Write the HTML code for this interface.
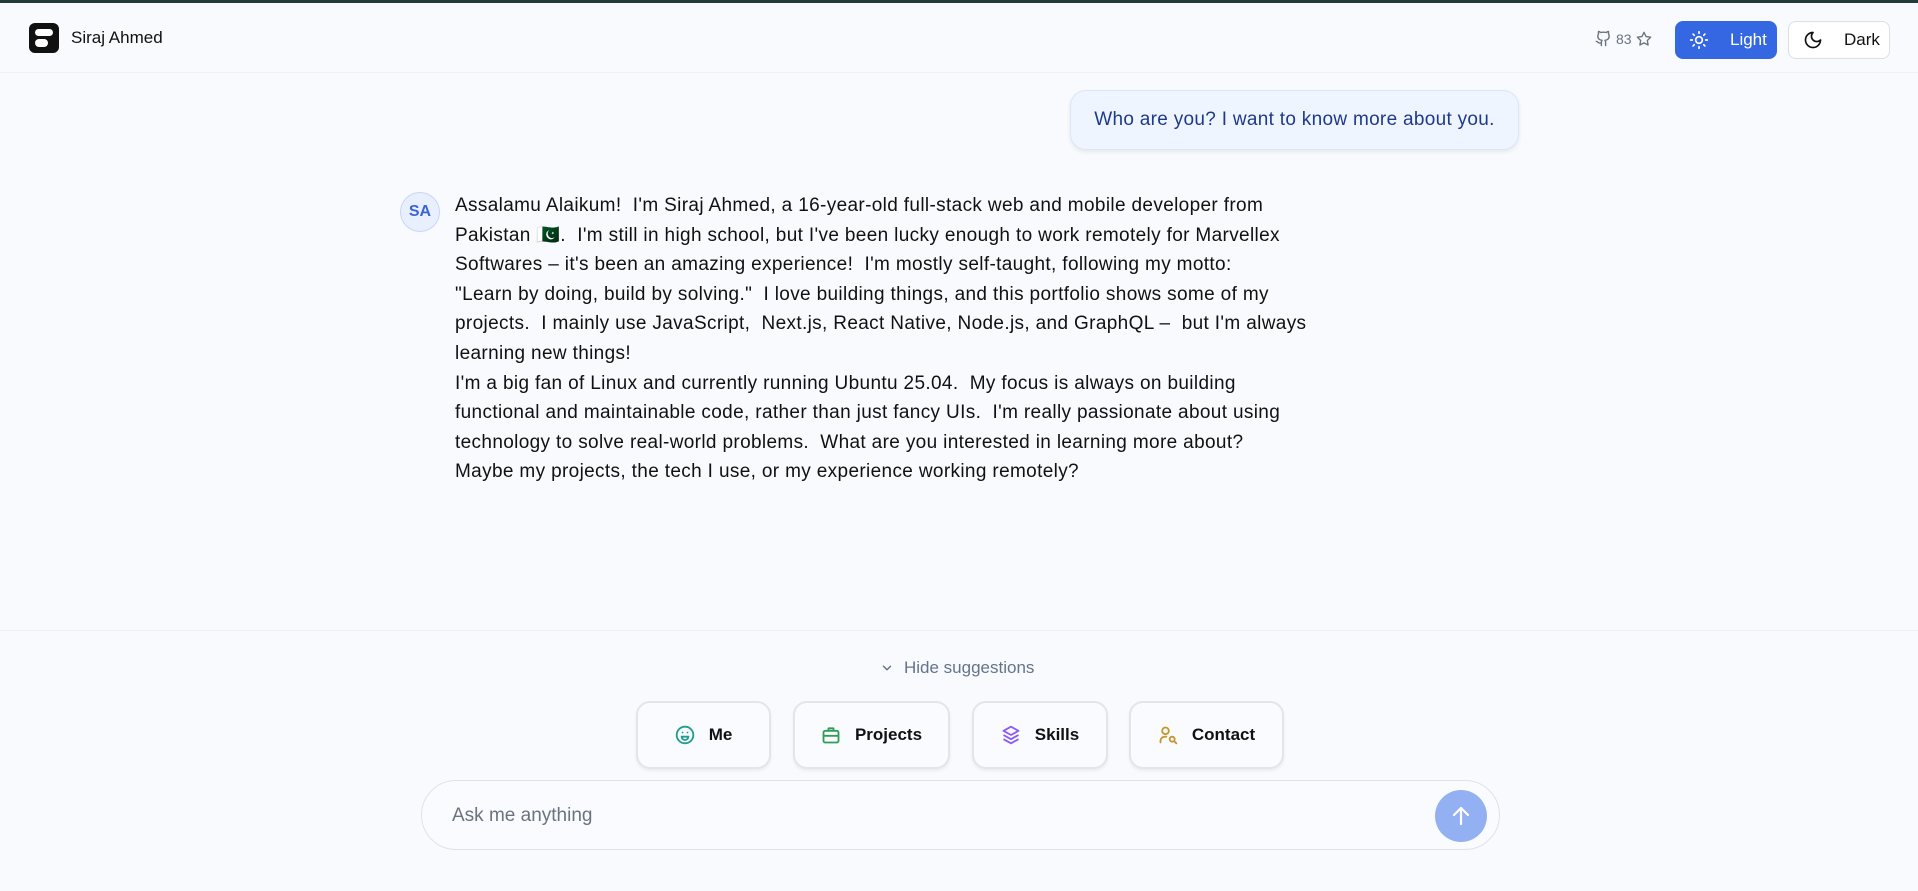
<!DOCTYPE html>
<html><head><meta charset="utf-8"><style>
*{box-sizing:border-box;margin:0;padding:0}
body{width:1918px;height:891px;background:#f9fafd;font-family:"Liberation Sans",sans-serif;position:relative;overflow:hidden;color:#111}
.top{position:absolute;left:0;top:0;width:100%;height:3px;background:#253a3a}
.hdr{position:absolute;left:0;top:3px;width:100%;height:70px;border-bottom:1px solid #eef0f4}
.logo{position:absolute;left:29px;top:20px;width:30px;height:30px;background:#111;border-radius:6px}
.logo i{position:absolute;background:#fff;border-radius:4px}
.name{position:absolute;left:71px;top:25px;font-size:17px;color:#111}
.gh{position:absolute;left:1595px;top:27px;font-size:14px;color:#6b7280;display:flex;align-items:center;gap:4px}
.btn{position:absolute;top:18px;height:38px;border-radius:8px;font-size:17px;display:flex;align-items:center}
.light{left:1675px;width:102px;background:#3567e3;color:#fff}
.dark{left:1788px;width:102px;background:#fff;border:1px solid #dcdfe4;color:#111}
.bubble{position:absolute;left:1070px;top:90px;width:449px;height:60px;background:#eff5ff;border:1px solid #dbe6f8;border-radius:16px;box-shadow:0 2px 4px rgba(0,0,0,.08);color:#1e3a8a;font-size:19px;letter-spacing:0.3px;display:flex;align-items:center;justify-content:center}
.av{position:absolute;left:400px;top:192px;width:40px;height:40px;border-radius:50%;background:#e8efff;border:1px solid #c9d7f5;color:#3a64d8;font-weight:bold;font-size:16px;display:flex;align-items:center;justify-content:center}
.msg{position:absolute;left:455px;top:191px;font-size:19px;letter-spacing:0.35px;line-height:29.6px;color:#111;white-space:nowrap}
.div{position:absolute;left:0;top:630px;width:100%;height:1px;background:#eef0f4}
.hide{position:absolute;left:880px;top:658px;font-size:17px;color:#64748b;display:flex;align-items:center;gap:10px}
.chip{position:absolute;top:701px;height:68px;background:#fafbfe;border:2px solid #e3e5ea;border-radius:14px;box-shadow:0 2px 3px rgba(0,0,0,.06);display:flex;align-items:center;justify-content:center;gap:14px;font-size:17px;font-weight:bold;color:#111}
.inp{position:absolute;left:421px;top:780px;width:1079px;height:70px;border:1px solid #dfe2e8;border-radius:35px;background:#fafbfe}
.ph{position:absolute;left:30px;top:24px;font-size:19px;color:#6b7280}
.send{position:absolute;right:12px;top:9px;width:52px;height:52px;border-radius:50%;background:#93b0f3;display:flex;align-items:center;justify-content:center}
</style></head><body>
<div class="top"></div>
<div class="hdr">
 <div class="logo"><i style="left:6px;top:6px;width:18px;height:7px"></i><i style="left:6px;top:16px;width:13px;height:8px"></i></div>
 <div class="name">Siraj Ahmed</div>
 <div class="gh"><svg width="17" height="17" viewBox="0 0 24 24" fill="none" stroke="#6b7280" stroke-width="2" stroke-linecap="round" stroke-linejoin="round"><path d="M15 22v-4a4.8 4.8 0 0 0-1-3.5c3 0 6-2 6-5.5.08-1.25-.27-2.48-1-3.5.28-1.15.28-2.35 0-3.5 0 0-1 0-3 1.5-2.64-.5-5.36-.5-8 0C6 2 5 2 5 2c-.3 1.15-.3 2.35 0 3.5A5.4 5.4 0 0 0 4 9c0 3.5 3 5.5 6 5.5-.39.49-.68 1.05-.85 1.65S8.93 17.38 9 18v4"/><path d="M9 18c-4.51 2-5-2-7-2"/></svg><span>83</span><svg width="16" height="16" viewBox="0 0 24 24" fill="none" stroke="#6b7280" stroke-width="2" stroke-linejoin="round"><path d="M12 2l3.1 6.3 6.9 1-5 4.9 1.2 6.8L12 17.8 5.8 21l1.2-6.8-5-4.9 6.9-1z"/></svg></div>
 <div class="btn light"><svg style="margin-left:14px" width="20" height="20" viewBox="0 0 24 24" fill="none" stroke="#fff" stroke-width="2" stroke-linecap="round"><circle cx="12" cy="12" r="4"/><path d="M12 2v2M12 20v2M4.9 4.9l1.4 1.4M17.7 17.7l1.4 1.4M2 12h2M20 12h2M4.9 19.1l1.4-1.4M17.7 6.3l1.4-1.4"/></svg><span style="margin-left:21px">Light</span></div>
 <div class="btn dark"><svg style="margin-left:14px" width="20" height="20" viewBox="0 0 24 24" fill="none" stroke="#111" stroke-width="2" stroke-linecap="round" stroke-linejoin="round"><path d="M12 3a6 6 0 0 0 9 9 9 9 0 1 1-9-9z"/></svg><span style="margin-left:21px">Dark</span></div>
</div>
<div class="bubble">Who are you? I want to know more about you.</div>
<div class="av">SA</div>
<div class="msg">Assalamu Alaikum!&nbsp; I'm Siraj Ahmed, a 16-year-old full-stack web and mobile developer from<br>Pakistan 🇵🇰.&nbsp; I'm still in high school, but I've been lucky enough to work remotely for Marvellex<br>Softwares – it's been an amazing experience!&nbsp; I'm mostly self-taught, following my motto:<br>"Learn by doing, build by solving."&nbsp; I love building things, and this portfolio shows some of my<br>projects.&nbsp; I mainly use JavaScript,&nbsp; Next.js, React Native, Node.js, and GraphQL –&nbsp; but I'm always<br>learning new things!<br>I'm a big fan of Linux and currently running Ubuntu 25.04.&nbsp; My focus is always on building<br>functional and maintainable code, rather than just fancy UIs.&nbsp; I'm really passionate about using<br>technology to solve real-world problems.&nbsp; What are you interested in learning more about?<br>Maybe my projects, the tech I use, or my experience working remotely?</div>
<div class="div"></div>
<div class="hide"><svg width="14" height="14" viewBox="0 0 24 24" fill="none" stroke="#64748b" stroke-width="2.5" stroke-linecap="round" stroke-linejoin="round"><path d="M6 9l6 6 6-6"/></svg><span>Hide suggestions</span></div>
<div class="chip" style="left:636px;width:135px"><svg width="20" height="20" viewBox="0 0 24 24" fill="none" stroke="#1f9e8f" stroke-width="2.2" stroke-linecap="round"><circle cx="12" cy="12" r="10"/><path d="M8 14a4 4 0 0 0 8 0z"/><path d="M9 9h.01M15 9h.01"/></svg><span>Me</span></div>
<div class="chip" style="left:793px;width:157px"><svg width="20" height="20" viewBox="0 0 24 24" fill="none" stroke="#2f9e55" stroke-width="2.2" stroke-linejoin="round"><rect x="3" y="7" width="18" height="14" rx="2"/><path d="M9 7V4h6v3M3 13h18"/></svg><span>Projects</span></div>
<div class="chip" style="left:972px;width:136px"><svg width="20" height="20" viewBox="0 0 24 24" fill="none" stroke="#8b5cf6" stroke-width="2.2" stroke-linejoin="round"><path d="M12 2l9 5-9 5-9-5z"/><path d="M3 12l9 5 9-5M3 17l9 5 9-5"/></svg><span>Skills</span></div>
<div class="chip" style="left:1129px;width:155px"><svg width="20" height="20" viewBox="0 0 24 24" fill="none" stroke="#c9952e" stroke-width="2.2" stroke-linecap="round"><circle cx="9" cy="7" r="4"/><path d="M3 21v-2a5 5 0 0 1 5-5h2"/><circle cx="17" cy="17" r="3"/><path d="M19.5 19.5L22 22"/></svg><span>Contact</span></div>
<div class="inp"><div class="ph">Ask me anything</div><div class="send"><svg width="24" height="24" viewBox="0 0 24 24" fill="none" stroke="#fff" stroke-width="2.2" stroke-linecap="round" stroke-linejoin="round"><path d="M12 20V4M5 11l7-7 7 7"/></svg></div></div>
</body></html>
